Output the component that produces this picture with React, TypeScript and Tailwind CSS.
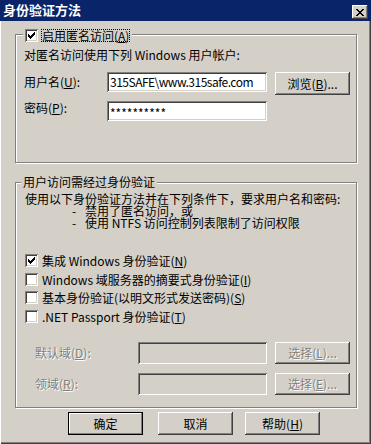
import React from 'react';

// Win2000 classic bevels
const raised =
  'shadow-[inset_-1px_-1px_#404040,inset_1px_1px_#ffffff,inset_-2px_-2px_#808080,inset_2px_2px_#d4d0c8]';
const sunken =
  'shadow-[inset_1px_1px_#808080,inset_-1px_-1px_#ffffff,inset_2px_2px_#404040,inset_-2px_-2px_#d4d0c8]';
const etched = 'border border-[#808080] shadow-[1px_1px_0_#ffffff,inset_1px_1px_0_#ffffff]';
const greyed = 'text-[#808080] [text-shadow:1px_1px_0_#ffffff]';

function Key({ children }: { children: React.ReactNode }) {
  return <span className="underline underline-offset-[1px]">{children}</span>;
}

function CheckBox({ checked }: { checked?: boolean }) {
  return (
    <span className={`flex h-[13px] w-[13px] shrink-0 items-center justify-center bg-white ${sunken}`}>
      {checked && (
        <svg width="7" height="7" viewBox="0 0 7 7" shapeRendering="crispEdges">
          <path
            fill="#000"
            d="M6 0h1v1H6z M5 1h2v1H5z M0 2h1v1H0z M4 2h3v1H4z M0 3h2v1H0z M3 3h3v1H3z M0 4h5v1H0z M1 5h3v1H1z M2 6h1v1H2z"
          />
        </svg>
      )}
    </span>
  );
}

function Button({
  children,
  isDefault,
  disabled,
  className = '',
}: {
  children: React.ReactNode;
  isDefault?: boolean;
  disabled?: boolean;
  className?: string;
}) {
  const frame = isDefault
    ? 'border border-black shadow-[inset_-1px_-1px_#808080,inset_1px_1px_#ffffff]'
    : raised;
  return (
    <div
      className={`flex w-[75px] shrink-0 items-center justify-center bg-[#d4d0c8] leading-[14px] ${frame} ${
        disabled ? greyed : 'text-black'
      } ${className}`}
    >
      {children}
    </div>
  );
}

function CheckRow({ checked, children, className = '' }: { checked?: boolean; children: React.ReactNode; className?: string }) {
  return (
    <div className={`flex h-[13px] items-center ${className}`}>
      <CheckBox checked={checked} />
      <span className="ml-[4px] whitespace-nowrap leading-[13px]">{children}</span>
    </div>
  );
}

export default function App() {
  return (
    <div className="h-[444px] w-[371px] overflow-hidden bg-[#d4d0c8] font-['Noto_Sans_CJK_SC',sans-serif] text-[12px] leading-[14px] text-black shadow-[inset_1px_0_#ffffff,inset_-1px_-1px_#404040,inset_-2px_-2px_#808080]">
      {/* Title bar */}
      <div className="flex h-[21px] items-start justify-between bg-[#0a246a] px-[3px]">
        <span className="mt-[2px] text-[13px] font-bold leading-[16px] text-white">身份验证方法</span>
        <div className={`mt-[5px] flex h-[14px] w-[16px] items-center justify-center bg-[#d4d0c8] ${raised}`}>
          <svg width="8" height="7" viewBox="0 0 8 7" shapeRendering="crispEdges">
            <path
              fill="#000"
              d="M0 0h2v1H0z M6 0h2v1H6z M1 1h2v1H1z M5 1h2v1H5z M2 2h4v1H2z M3 3h2v1H3z M2 4h4v1H2z M1 5h2v1H1z M5 5h2v1H5z M0 6h2v1H0z M6 6h2v1H6z"
            />
          </svg>
        </div>
      </div>

      {/* Anonymous access */}
      <div className={`relative ml-[15px] mt-[13px] h-[129px] w-[342px] ${etched}`}>
        <div className="absolute left-[7px] top-[-7px] flex h-[14px] items-center bg-[#d4d0c8] px-[2px]">
          <CheckBox checked />
          <span className="ml-[3px] border border-dotted border-black leading-[11px]">
            启用匿名访问(<Key>A</Key>)
          </span>
        </div>
        <div className="pl-[8px] pt-[13px]">
          <div>对匿名访问使用下列 Windows 用户帐户:</div>
          <div className="mt-[10px] flex items-start">
            <span className="w-[83px] leading-[20px]">
              用户名(<Key>U</Key>):
            </span>
            <div className={`flex h-[20px] w-[160px] items-center bg-white pl-[3px] tracking-[-0.5px] ${sunken}`}>
              315SAFE\www.315safe.com
            </div>
            <Button className="ml-[8px] h-[23px]">
              浏览(<Key>B</Key>)...
            </Button>
          </div>
          <div className="mt-[6px] flex items-start">
            <span className="w-[83px] leading-[14px]">
              密码(<Key>P</Key>):
            </span>
            <div className={`flex h-[20px] w-[160px] items-center bg-white pl-[3px] ${sunken}`}>
              <span className="translate-y-[2px]">**********</span>
            </div>
          </div>
        </div>
      </div>

      {/* Authenticated access */}
      <div className={`relative ml-[15px] mt-[19px] h-[226px] w-[342px] ${etched}`}>
        <div className="absolute left-[5px] top-[-8px] bg-[#d4d0c8] px-[2px]">用户访问需经过身份验证</div>
        <div className="pl-[9px] pt-[10px]">
          <div className="leading-[12px]">
            <div>使用以下身份验证方法并在下列条件下，要求用户名和密码:</div>
            <div className="flex pl-[47px]">
              <span className="w-[13px]">-</span>
              <span>禁用了匿名访问，或</span>
            </div>
            <div className="flex pl-[47px]">
              <span className="w-[13px]">-</span>
              <span>使用 NTFS 访问控制列表限制了访问权限</span>
            </div>
          </div>

          <CheckRow checked className="mt-[25px]">
            集成 Windows 身份验证(<Key>N</Key>)
          </CheckRow>
          <CheckRow className="mt-[6px]">
            Windows 域服务器的摘要式身份验证(<Key>I</Key>)
          </CheckRow>
          <CheckRow className="mt-[5px]">
            基本身份验证(以明文形式发送密码)(<Key>S</Key>)
          </CheckRow>
          <CheckRow className="mt-[6px]">
            .NET Passport 身份验证(<Key>T</Key>)
          </CheckRow>

          <div className="mt-[19px] flex items-center">
            <span className={`ml-[10px] w-[103px] ${greyed}`}>
              默认域(<Key>D</Key>):
            </span>
            <div className={`h-[22px] w-[129px] bg-[#d4d0c8] ${sunken}`} />
            <Button disabled className="ml-[8px] h-[22px]">
              选择(<Key>L</Key>)...
            </Button>
          </div>
          <div className="mt-[9px] flex items-center">
            <span className={`ml-[10px] w-[103px] ${greyed}`}>
              领域(<Key>R</Key>):
            </span>
            <div className={`h-[22px] w-[129px] bg-[#d4d0c8] ${sunken}`} />
            <Button disabled className="ml-[8px] h-[22px]">
              选择(<Key>E</Key>)...
            </Button>
          </div>
        </div>
      </div>

      {/* Dialog buttons */}
      <div className="mt-[4px] flex">
        <Button isDefault className="ml-[68px] h-[23px]">
          确定
        </Button>
        <Button className="ml-[15px] h-[23px]">取消</Button>
        <Button className="ml-[12px] h-[23px]">
          帮助(<Key>H</Key>)
        </Button>
      </div>
    </div>
  );
}
